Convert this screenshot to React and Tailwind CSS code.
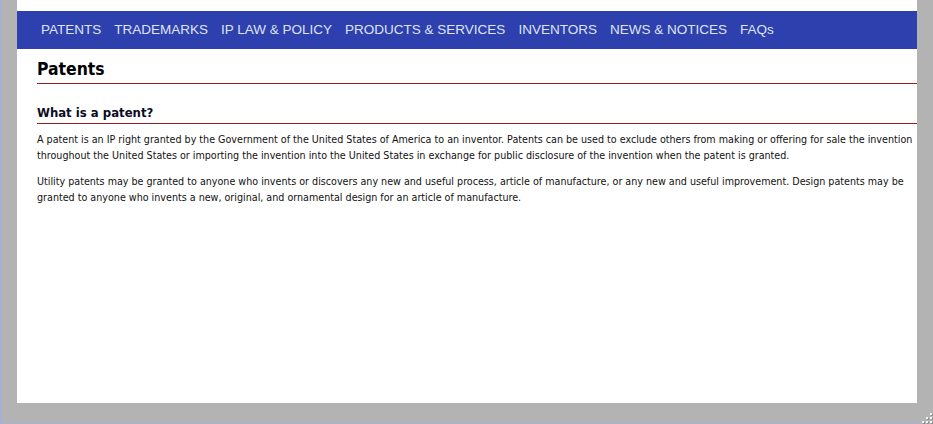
import React from 'react';

const NAV = ['PATENTS', 'TRADEMARKS', 'IP LAW & POLICY', 'PRODUCTS & SERVICES', 'INVENTORS', 'NEWS & NOTICES', 'FAQs'];

const tahoma = { fontFamily: '"DejaVu Sans Condensed", "DejaVu Sans", sans-serif' };

function Grip() {
  const dots = [
    [8, 0],
    [4, 4], [8, 4],
    [0, 8], [4, 8], [8, 8],
  ];
  return (
    <svg className="absolute bottom-0 right-0" width="11" height="11" viewBox="0 0 11 11">
      {dots.map(([x, y]) => (
        <g key={`${x}-${y}`}>
          <rect x={x + 1} y={y + 1} width="2" height="2" fill="#8d8d8d" />
          <rect x={x} y={y} width="2" height="2" fill="#f4f4f4" />
        </g>
      ))}
    </svg>
  );
}

export default function App() {
  return (
    <div className="relative w-[933px] h-[424px] overflow-hidden bg-[#b3b3b3] border-l-2 border-[#a9b1d3]">
      <div className="ml-[15px] w-[900px] h-[403px] bg-white pt-[11px]">
        <nav
          className="flex h-[38px] items-center gap-[13px] bg-[#2e40ad] pl-[24px] text-[13.5px] text-[#dfe3f4]"
          style={{ fontFamily: '"Liberation Sans", Arial, sans-serif' }}
        >
          {NAV.map((item) => (
            <a key={item} className="whitespace-nowrap">{item}</a>
          ))}
        </nav>

        <div className="pl-[20px] text-black" style={tahoma}>
          <h1 className="mt-[10px] border-b border-[#962020] pb-[3px] text-[17.4px] font-bold leading-[21px]">Patents</h1>
          <h2 className="mt-[20px] border-b border-[#962020] pb-[2px] text-[13px] font-bold leading-[17px] text-[#0c0c24]">
            What is a patent?
          </h2>
          <div className="pt-[8px] text-[10.65px] leading-[16px] text-[#111]">
            <p>
              A patent is an IP right granted by the Government of the United States of America to an inventor. Patents can be used to exclude others from making or offering for sale the invention throughout the United States or importing the invention into the United States in exchange for public disclosure of the invention when the patent is granted.
            </p>
            <p className="mt-[10px] pr-[8px]">
              Utility patents may be granted to anyone who invents or discovers any new and useful process, article of manufacture, or any new and useful improvement. Design patents may be granted to anyone who invents a new, original, and ornamental design for an article of manufacture.
            </p>
          </div>
        </div>
      </div>
      <div className="absolute bottom-0 left-0 right-[11px] h-px bg-[#aab2d4]" />
      <Grip />
    </div>
  );
}
